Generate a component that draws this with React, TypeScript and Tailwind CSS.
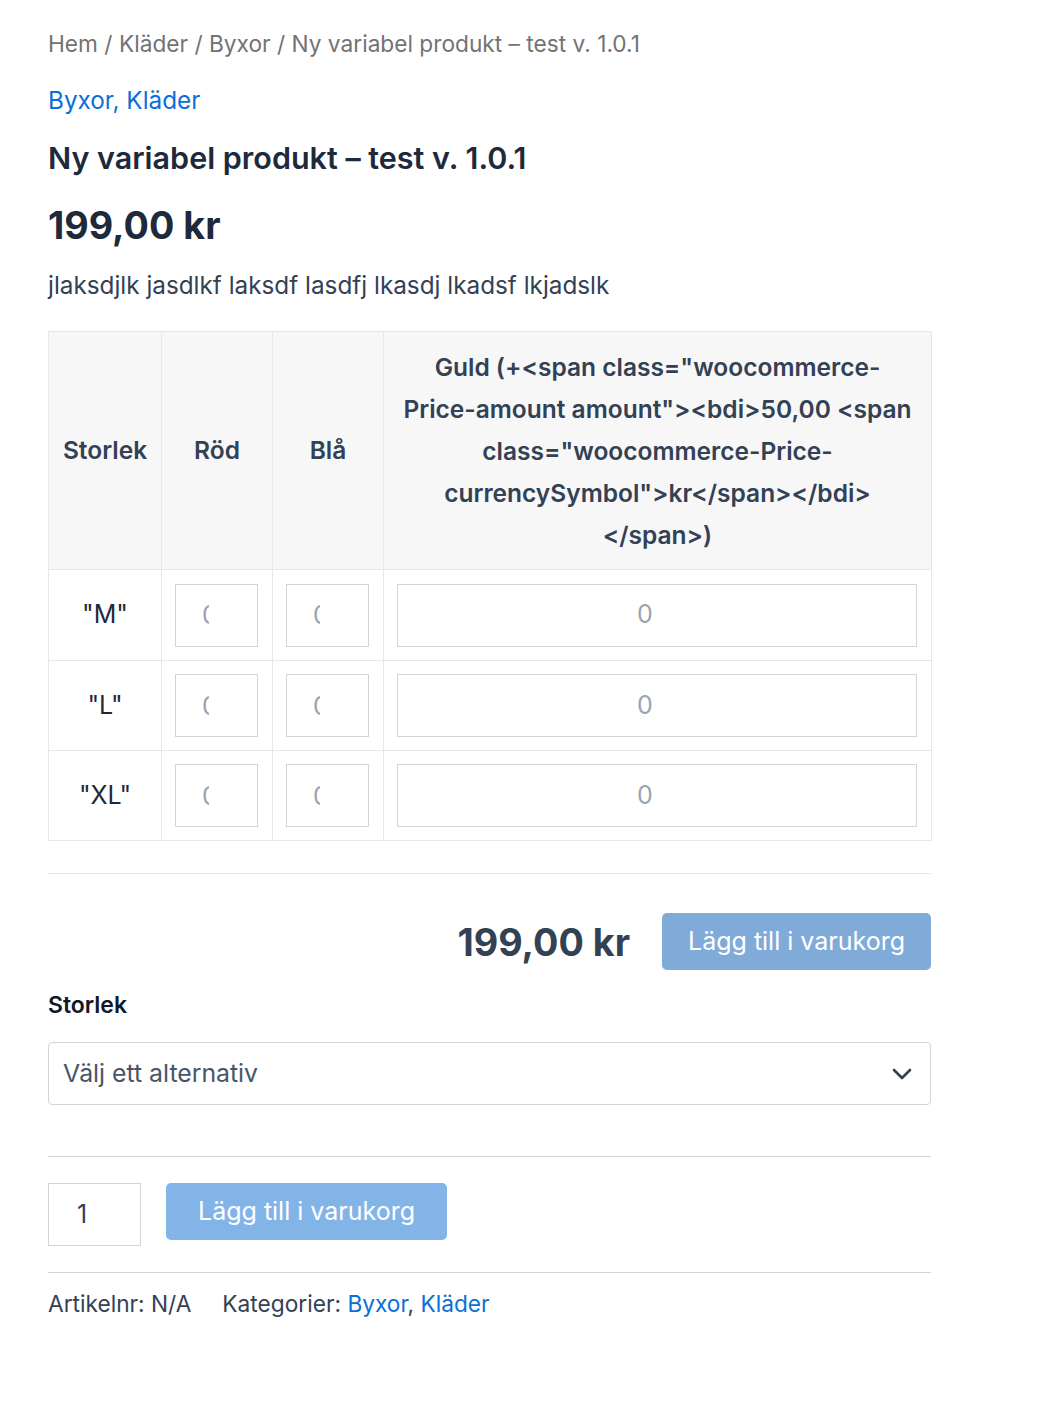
import React from "react";

const Clipped = () => (
  <div className="h-[63px] w-[83px] border border-[#d1d5db] bg-white flex items-center pl-[26px]">
    <span className="inline-block w-[7px] overflow-hidden text-[25px] leading-[32px] text-[#9ca3af]">0</span>
  </div>
);

const Row = ({ label, h }: { label: string; h: string }) => (
  <tr className={h}>
    <td className="border border-[#e5e7eb] text-center text-[25px] text-[#1e293b] px-[14px]">{label}</td>
    <td className="border border-[#e5e7eb] px-[13px]"><Clipped /></td>
    <td className="border border-[#e5e7eb] px-[13px]"><Clipped /></td>
    <td className="border border-[#e5e7eb] pl-[13px] pr-[14px]">
      <div className="h-[63px] w-full border border-[#d1d5db] bg-white flex items-center justify-center pr-[24px] text-[25px] text-[#9ca3af]">0</div>
    </td>
  </tr>
);

export default function App() {
  return (
    <div className="min-h-[1424px] bg-white" style={{ fontFamily: "Inter, 'Noto Sans', sans-serif" }}>
      <div className="w-[883px] ml-[48px] pt-[28px] pb-[60px]">
        <div className="text-[22.7px] leading-[32px] text-[#737373]">Hem / Kläder / Byxor / Ny variabel produkt – test v. 1.0.1</div>
        <div className="mt-[24px] text-[24.3px] leading-[32px] text-[#0b6fd8]">
          <span>Byxor</span>, <span>Kläder</span>
        </div>
        <h1 className="mt-[22px] text-[30.5px] leading-[40px] font-semibold text-[#1e293b]">Ny variabel produkt – test v. 1.0.1</h1>
        <div className="mt-[23px] text-[37.7px] leading-[48px] font-bold text-[#1e293b]">199,00 kr</div>
        <p className="mt-[20px] text-[24.3px] leading-[32px] text-[#334155]">jlaksdjlk jasdlkf laksdf lasdfj lkasdj lkadsf lkjadslk</p>

        <table className="mt-[30px] w-[883px] border-collapse table-fixed">
          <colgroup>
            <col className="w-[113px]" />
            <col className="w-[111px]" />
            <col className="w-[111px]" />
            <col className="w-[548px]" />
          </colgroup>
          <thead>
            <tr className="bg-[#f7f7f7]">
              <th className="border border-[#e5e7eb] text-[24.5px] font-semibold text-[#334155] px-[6px] py-[14px]">Storlek</th>
              <th className="border border-[#e5e7eb] text-[24.5px] font-semibold text-[#334155] px-[6px]">Röd</th>
              <th className="border border-[#e5e7eb] text-[24.5px] font-semibold text-[#334155] px-[6px]">Blå</th>
              <th className="border border-[#e5e7eb] text-[24.5px] leading-[42px] font-semibold text-[#334155] px-[6px] pt-[14px] pb-[13px]">
                Guld (+&lt;span class="woocommerce-<br />
                Price-amount amount"&gt;&lt;bdi&gt;50,00 &lt;span<br />
                class="woocommerce-Price-<br />
                currencySymbol"&gt;kr&lt;/span&gt;&lt;/bdi&gt;<br />
                &lt;/span&gt;)
              </th>
            </tr>
          </thead>
          <tbody>
            <Row label={'"M"'} h="h-[91px]" />
            <Row label={'"L"'} h="h-[90px]" />
            <Row label={'"XL"'} h="h-[90px]" />
          </tbody>
        </table>

        <div className="mt-[32px] border-t border-[#e5e7eb]" />

        <div className="mt-[39px] flex items-center justify-end gap-[32px]">
          <div className="text-[37.7px] leading-[48px] font-bold text-[#334155]">199,00 kr</div>
          <button className="h-[57px] w-[269px] rounded-[5px] bg-[#80abd9] text-white text-[25px]">Lägg till i varukorg</button>
        </div>

        <div className="mt-[20px] text-[23px] leading-[30px] font-semibold text-[#111827]">Storlek</div>
        <div className="mt-[22px] h-[63px] border border-[#d1d5db] rounded-[4px] flex items-center justify-between pl-[14px] pr-[18px]">
          <span className="text-[24.8px] text-[#475569]">Välj ett alternativ</span>
          <svg width="20" height="12" viewBox="0 0 20 12" fill="none">
            <path d="M2 2 L10 10 L18 2" stroke="#334155" strokeWidth="2.6" strokeLinecap="round" strokeLinejoin="round" />
          </svg>
        </div>

        <div className="mt-[51px] border-t border-[#d1d5db]" />

        <div className="mt-[26px] flex items-start gap-[25px]">
          <div className="h-[63px] w-[93px] border border-[#d1d5db] flex items-center pl-[28px] text-[25px] text-[#334155]">1</div>
          <button className="h-[57px] w-[281px] rounded-[5px] bg-[#83b4e8] text-white text-[25px]">Lägg till i varukorg</button>
        </div>

        <div className="mt-[26px] border-t border-[#d1d5db]" />

        <div className="mt-[16px] text-[22.7px] leading-[30px] text-[#334155] flex gap-[31px]">
          <span>Artikelnr: N/A</span>
          <span>
            Kategorier: <span className="text-[#0b6fd8]">Byxor</span>, <span className="text-[#0b6fd8]">Kläder</span>
          </span>
        </div>
      </div>
    </div>
  );
}
